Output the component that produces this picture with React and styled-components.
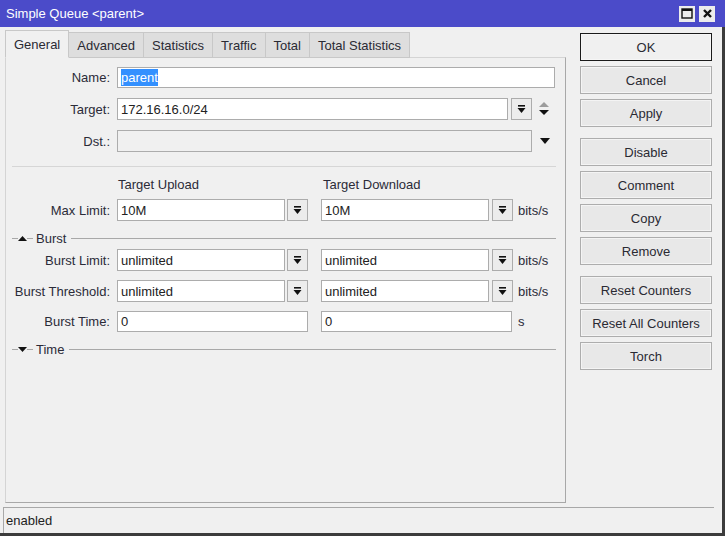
import React from "react";
import styled, { createGlobalStyle } from "styled-components";

const Global = createGlobalStyle`
  html, body { margin: 0; padding: 0; background: #f0f0f0; }
  body { font-family: "Liberation Sans", Arial, sans-serif; font-size: 13px; color: #222; }
`;

const Window = styled.div({
  width: "725px",
  height: "536px",
  display: "flex",
  flexDirection: "column",
  background: "#f0f0f0",
  boxSizing: "border-box",
  overflow: "hidden",
});

const TitleBar = styled.div({
  height: "27px",
  flex: "none",
  background: "#4b4bc9",
  display: "flex",
  alignItems: "center",
  padding: "0 10px 0 6px",
  color: "#fff",
  fontSize: "13px",
});

const Title = styled.div({
  flex: 1,
});

const TitleButtons = styled.div({
  display: "flex",
  gap: "4px",
});

const TitleBtn = styled.div({
  width: "16px",
  height: "16px",
  background: "#ececec",
  display: "flex",
  alignItems: "center",
  justifyContent: "center",
  boxSizing: "border-box",
});

const Body = styled.div({
  flex: 1,
  display: "flex",
  borderRight: "3px solid #3c3c3c",
  minHeight: 0,
});

const LeftCol = styled.div({
  width: "561px",
  marginLeft: "5px",
  paddingTop: "2px",
  display: "flex",
  flexDirection: "column",
});

const Tabs = styled.div({
  display: "flex",
  height: "28px",
  alignItems: "flex-end",
  position: "relative",
  zIndex: 1,
});

const Tab = styled.div(({ $active }) => ({
  height: $active ? "28px" : "26px",
  padding: "0 8px",
  display: "flex",
  alignItems: "center",
  boxSizing: "border-box",
  background: $active ? "#f0f0f0" : "#dedede",
  border: "1px solid #c8c8c8",
  borderBottom: $active ? "1px solid #f0f0f0" : "1px solid #c8c8c8",
  borderLeft: $active ? "1px solid #c8c8c8" : "none",
  color: "#2a2a33",
  marginBottom: "-1px",
}));

const Panel = styled.div({
  height: "446px",
  boxSizing: "border-box",
  border: "1px solid #d4d4d4",
  borderRightColor: "#a8a8a8",
  borderBottomColor: "#a8a8a8",
  background: "#f0f0f0",
  padding: "9px 0 0 0",
  display: "flex",
  flexDirection: "column",
});

const Row = styled.div(({ $top = 0, $h = 22 }) => ({
  display: "flex",
  alignItems: "center",
  height: `${$h}px`,
  marginTop: `${$top}px`,
}));

const Label = styled.div({
  width: "104px",
  marginRight: "7px",
  textAlign: "right",
  color: "#2b2b38",
  whiteSpace: "nowrap",
});

const Input = styled.div(({ $w, $ml = 0, $disabled }) => ({
  width: `${$w}px`,
  height: "100%",
  marginLeft: `${$ml}px`,
  boxSizing: "border-box",
  border: "1px solid #acacac",
  background: $disabled ? "#f0f0f0" : "#fff",
  display: "flex",
  alignItems: "center",
  padding: "0 3px",
  color: "#222",
  flex: "none",
}));

const Selected = styled.span({
  background: "#3390ff",
  color: "#fff",
  padding: "1px 0",
});

const DropBtn = styled.div(({ $ml = 2 }) => ({
  width: "21px",
  height: "100%",
  marginLeft: `${$ml}px`,
  boxSizing: "border-box",
  border: "1px solid #acacac",
  background: "#ececec",
  display: "flex",
  alignItems: "center",
  justifyContent: "center",
  flex: "none",
}));

const Pair = styled.div(({ $ml = 0 }) => ({
  display: "flex",
  height: "100%",
  marginLeft: `${$ml}px`,
}));

const Unit = styled.div(({ $ml }) => ({
  marginLeft: `${$ml}px`,
  color: "#2b2b38",
}));

const Arrows = styled.div(({ $ml }) => ({
  marginLeft: `${$ml}px`,
  display: "flex",
  alignItems: "center",
}));

const Line = styled.div(({ $top }) => ({
  height: "1px",
  background: "#d6d6d6",
  margin: `${$top}px 9px 0 6px`,
}));

const Heading = styled.div(({ $w }) => ({
  width: `${$w}px`,
  paddingLeft: "1px",
  color: "#2b2b38",
  flex: "none",
}));

const Section = styled.div(({ $top }) => ({
  display: "flex",
  alignItems: "center",
  height: "14px",
  marginTop: `${$top}px`,
  marginLeft: "6px",
  marginRight: "9px",
  color: "#2b2b38",
}));

const Dash = styled.div(({ $w }) => ({
  width: `${$w}px`,
  height: "1px",
  background: "#a8a8a8",
  flex: $w ? "none" : 1,
}));

const SectionText = styled.div({
  margin: "0 5px 0 3px",
});

const RightCol = styled.div({
  width: "132px",
  marginLeft: "14px",
  paddingTop: "6px",
  display: "flex",
  flexDirection: "column",
});

const Group = styled.div(({ $top = 0 }) => ({
  display: "flex",
  flexDirection: "column",
  gap: "5px",
  marginTop: `${$top}px`,
}));

const Button = styled.div(({ $default }) => ({
  height: "28px",
  boxSizing: "border-box",
  border: $default ? "1px solid #1a1a1a" : "1px solid #adadad",
  boxShadow: $default ? "inset 0 0 0 1px #f6f6f6" : "inset 0 0 0 1px #f4f4f4",
  background: $default ? "#f0f0f0" : "#e8e8e8",
  display: "flex",
  alignItems: "center",
  justifyContent: "center",
  color: "#2a2a33",
}));

const StatusBar = styled.div({
  height: "29px",
  flex: "none",
  boxSizing: "border-box",
  borderRight: "3px solid #3c3c3c",
  borderBottom: "3px solid #3c3c3c",
  padding: "0 8px 0 3px",
  display: "flex",
});

const StatusField = styled.div({
  flex: 1,
  borderTop: "1px solid #a8a8a8",
  borderLeft: "1px solid #a8a8a8",
  display: "flex",
  alignItems: "center",
  padding: "0 2px",
  color: "#222",
});

function DropIcon() {
  return (
    <svg width="9" height="10" viewBox="0 0 9 10">
      <rect x="1" y="1" width="7" height="1.6" fill="#111" />
      <polygon points="0.5,4 8.5,4 4.5,9" fill="#111" />
    </svg>
  );
}

function Tri({ up, color = "#111", w = 10, h = 6 }) {
  const pts = up ? `0,${h} ${w},${h} ${w / 2},0` : `0,0 ${w},0 ${w / 2},${h}`;
  return (
    <svg width={w} height={h} viewBox={`0 0 ${w} ${h}`}>
      <polygon points={pts} fill={color} />
    </svg>
  );
}

function LimitRow({ label, up, down, top }) {
  return (
    <Row $top={top}>
      <Label>{label}</Label>
      <Pair>
        <Input $w={168}>{up}</Input>
        <DropBtn>
          <DropIcon />
        </DropBtn>
      </Pair>
      <Pair $ml={13}>
        <Input $w={168}>{down}</Input>
        <DropBtn $ml={3}>
          <DropIcon />
        </DropBtn>
      </Pair>
      <Unit $ml={5}>bits/s</Unit>
    </Row>
  );
}

function SectionHead({ label, open, top }) {
  return (
    <Section $top={top}>
      <Dash $w={6} />
      <Tri up={open} w={9} h={5} />
      <Dash $w={6} />
      <SectionText>{label}</SectionText>
      <Dash />
    </Section>
  );
}

const tabs = ["General", "Advanced", "Statistics", "Traffic", "Total", "Total Statistics"];

export default function App() {
  return (
    <Window>
      <Global />
      <TitleBar>
        <Title>Simple Queue &lt;parent&gt;</Title>
        <TitleButtons>
          <TitleBtn>
            <svg width="12" height="11" viewBox="0 0 12 11">
              <rect x="1" y="1" width="10" height="9" fill="none" stroke="#111" strokeWidth="1.4" />
              <rect x="1" y="1" width="10" height="2" fill="#111" />
            </svg>
          </TitleBtn>
          <TitleBtn>
            <svg width="11" height="11" viewBox="0 0 11 11">
              <path d="M2 2 L9 9 M9 2 L2 9" stroke="#111" strokeWidth="2.4" />
            </svg>
          </TitleBtn>
        </TitleButtons>
      </TitleBar>
      <Body>
        <LeftCol>
          <Tabs>
            {tabs.map((t, i) => (
              <Tab key={t} $active={i === 0}>
                {t}
              </Tab>
            ))}
          </Tabs>
          <Panel>
            <Row $h={21}>
              <Label>Name:</Label>
              <Input $w={438}>
                <Selected>parent</Selected>
              </Input>
            </Row>
            <Row $top={10}>
              <Label>Target:</Label>
              <Input $w={391}>172.16.16.0/24</Input>
              <DropBtn $ml={3}>
                <DropIcon />
              </DropBtn>
              <Arrows $ml={7}>
                <svg width="10" height="14" viewBox="0 0 10 14">
                  <polygon points="0,5 10,5 5,0" fill="#9c9c9c" />
                  <polygon points="0,8 10,8 5,13" fill="#111" />
                </svg>
              </Arrows>
            </Row>
            <Row $top={10}>
              <Label>Dst.:</Label>
              <Input $w={415} $disabled />
              <Arrows $ml={8}>
                <Tri w={10} h={6} />
              </Arrows>
            </Row>
            <Line $top={14} />
            <Row $top={9} $h={16}>
              <Label />
              <Heading $w={204}>Target Upload</Heading>
              <Heading $w={200}>Target Download</Heading>
            </Row>
            <LimitRow label="Max Limit:" up="10M" down="10M" top={7} />
            <SectionHead label="Burst" open top={10} />
            <LimitRow label="Burst Limit:" up="unlimited" down="unlimited" top={4} />
            <LimitRow label="Burst Threshold:" up="unlimited" down="unlimited" top={9} />
            <Row $top={9} $h={21}>
              <Label>Burst Time:</Label>
              <Input $w={191}>0</Input>
              <Input $w={191} $ml={13}>0</Input>
              <Unit $ml={6}>s</Unit>
            </Row>
            <SectionHead label="Time" top={10} />
          </Panel>
        </LeftCol>
        <RightCol>
          <Group>
            <Button $default>OK</Button>
            <Button>Cancel</Button>
            <Button>Apply</Button>
          </Group>
          <Group $top={11}>
            <Button>Disable</Button>
            <Button>Comment</Button>
            <Button>Copy</Button>
            <Button>Remove</Button>
          </Group>
          <Group $top={11}>
            <Button>Reset Counters</Button>
            <Button>Reset All Counters</Button>
            <Button>Torch</Button>
          </Group>
        </RightCol>
      </Body>
      <StatusBar>
        <StatusField>enabled</StatusField>
      </StatusBar>
    </Window>
  );
}
